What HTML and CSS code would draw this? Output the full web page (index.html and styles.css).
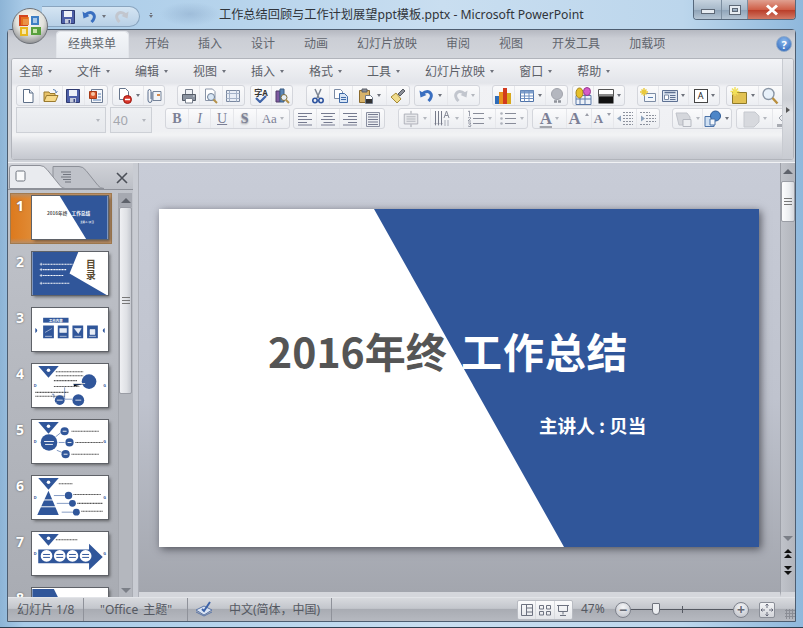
FILE: index.html
```html
<!DOCTYPE html>
<html lang="zh-CN">
<head>
    <meta charset="UTF-8">
    <title>工作总结回顾与工作计划展望ppt模板.pptx - Microsoft PowerPoint</title>
    <link rel="stylesheet" href="styles.css">
</head>
<body>

<!-- icon sprite -->
<svg class="sprite" xmlns="http://www.w3.org/2000/svg">
    <symbol id="i-new" viewBox="0 0 16 16"><path d="M3.5 1.5h6l3.5 3.5v9.500h-9.500z" fill="#fff" stroke="#5d6f88"/><path d="M9.500 1.500v3.500h3.500" fill="#dfe6f0" stroke="#5d6f88"/></symbol>
    <symbol id="i-open" viewBox="0 0 16 16"><path d="M1 13V4h5l1 1.500h5V8" fill="#e8c36a" stroke="#9a7a2e"/><path d="M1 13.500l2.500-6h11.500l-2.500 6z" fill="#f6d98a" stroke="#9a7a2e"/><path d="M10 1.500q3 0 3.500 3l1-1M13.500 4.500l-1.500-.5" fill="none" stroke="#5a7fb0"/></symbol>
    <symbol id="i-save" viewBox="0 0 16 16"><path d="M1.500 1.500h13v13h-13z" fill="#4d5fa8" stroke="#2f3a70"/><path d="M4 2h8v6H4z" fill="#eef1f8"/><path d="M5 10h6v4.500H5z" fill="#c6cbdc"/><path d="M8.500 11h1.500v3h-1.500z" fill="#3a4680"/></symbol>
    <symbol id="i-publish" viewBox="0 0 16 16"><path d="M3.500 1.500h11v13h-11z" fill="#f4f6fa" stroke="#6d7c95"/><path d="M1.500 3.500h7v7h-7z" fill="#d9572b" stroke="#a63a16"/><circle cx="5" cy="6" r="2" fill="#f6c6a6"/><path d="M10 6h3M10 9h3M5 12h8" stroke="#5a7fb0"/></symbol>
    <symbol id="i-nofile" viewBox="0 0 16 16"><path d="M2.500 .5h6l3 3v8h-9z" fill="#fff" stroke="#66758c"/><circle cx="10.500" cy="11.500" r="4" fill="#d8352a" stroke="#9c1d14"/><path d="M8 11.500h5" stroke="#fff" stroke-width="1.500"/></symbol>
    <symbol id="i-attach" viewBox="0 0 16 16"><path d="M7 3.500h8v9H7z" fill="#f2f4f8" stroke="#76849a"/><path d="M11 6h3v2h-3z" fill="#d58a4c"/><path d="M6 4v8q0 2.500-2 2.500T2 12V3.500q0-2 1.500-2T5 3.500V11" fill="none" stroke="#5b6f8e"/></symbol>
    <symbol id="i-print" viewBox="0 0 16 16"><path d="M4.500 1.500h7v5h-7z" fill="#eef0f4" stroke="#777f8c"/><path d="M1.500 6.500h13v6h-13z" fill="#8a929f" stroke="#555c68"/><path d="M4.500 10.500h7v4.500h-7z" fill="#fff" stroke="#777f8c"/><path d="M12 8h1.500" stroke="#e4e8ee"/></symbol>
    <symbol id="i-preview" viewBox="0 0 16 16"><path d="M2.500 1h7l2.500 2.500v9h-9.500z" fill="#fff" stroke="#8a95a8"/><circle cx="8" cy="9" r="3.500" fill="#d9e7f5" stroke="#6f7f96"/><path d="M10.500 11.500l3.500 3.500" stroke="#b5924a" stroke-width="2"/></symbol>
    <symbol id="i-grid" viewBox="0 0 16 16"><path d="M1.500 2.500h13v11h-13z" fill="#e9eef6" stroke="#7a88a0"/><path d="M1.500 5.500h13M4.500 2.500v11M11.500 2.500v11M1.500 10.500h13" stroke="#a4b2c8" fill="none"/></symbol>
    <symbol id="i-research" viewBox="0 0 16 16"><path d="M2 3h4v11H2z" fill="#7d5aa0" stroke="#503a6a"/><path d="M6 1h4v13H6z" fill="#5a86b8" stroke="#3a5a80"/><circle cx="10" cy="9.500" r="3" fill="#e6eef6" stroke="#7a6a3a"/><path d="M12 12l3 3" stroke="#b5924a" stroke-width="2"/></symbol>
    <symbol id="i-cut" viewBox="0 0 16 16"><path d="M5 1l4 9M11 1l-4 9" stroke="#7d8694" stroke-width="1.500" fill="none"/><circle cx="5" cy="12.500" r="2.200" fill="none" stroke="#2f55a0" stroke-width="1.600"/><circle cx="11" cy="12.500" r="2.200" fill="none" stroke="#2f55a0" stroke-width="1.600"/></symbol>
    <symbol id="i-copy" viewBox="0 0 16 16"><path d="M1.500 1.500h6l2 2v7h-8z" fill="#fff" stroke="#7a8aa4"/><path d="M6.500 5.500h5l3 3v6h-8z" fill="#d7e4f5" stroke="#3f6aa8"/><path d="M8 9.500h5M8 11.500h5" stroke="#3f6aa8"/></symbol>
    <symbol id="i-paste" viewBox="0 0 16 16"><path d="M1.500 2.500h10v12h-10z" fill="#d7b36a" stroke="#8b6a2c"/><path d="M4 1h5v3H4z" fill="#8a8f98" stroke="#5a5f68"/><path d="M7.500 7.500h5l2 2v6h-7z" fill="#fff" stroke="#6c7686"/><path d="M8 11h6v4H8z" fill="#333"/></symbol>
    <symbol id="i-brush" viewBox="0 0 16 16"><path d="M1 9l5-4 5 6-4 4z" fill="#f0dc8c" stroke="#a58a36"/><path d="M8 6l5-5 2 2-5 5z" fill="#8b8f98" stroke="#565a63"/></symbol>
    <symbol id="i-undo" viewBox="0 0 16 16"><path d="M3 6q6-5 9 0 1.500 3-2.500 7" fill="none" stroke="currentColor" stroke-width="3"/><path d="M.5 2.500l1 7 6-2.500z" fill="currentColor"/></symbol>
    <symbol id="i-redo" viewBox="0 0 16 16"><path d="M13 6q-6-5-9 0-1.500 3 2.500 7" fill="none" stroke="currentColor" stroke-width="3"/><path d="M15.500 2.500l-1 7-6-2.500z" fill="currentColor"/></symbol>
    <symbol id="i-chart" viewBox="0 0 18 18"><path d="M1 9h4v8H1z" fill="#2f6cb8"/><path d="M5 5h4v12H5z" fill="#e8901e"/><path d="M9 1h4v16H9z" fill="#d23a1e"/><path d="M13 6h4v11h-4z" fill="#d8a81e"/></symbol>
    <symbol id="i-table" viewBox="0 0 16 16"><path d="M1.500 2.500h13v11h-13z" fill="#fff" stroke="#4e72a8"/><path d="M1.500 2.500h13v3h-13z" fill="#7f9fcc"/><path d="M1.500 8h13M1.500 10.500h13M5.500 2.500v11M10 2.500v11" stroke="#6f8fc0" fill="none"/></symbol>
    <symbol id="i-link" viewBox="0 0 16 16"><circle cx="8" cy="6" r="5.500" fill="#b4b7bf" stroke="#a0a3ab"/><path d="M5 13.500h3M9 13.500h3" stroke="#8f929a" stroke-width="2.500"/></symbol>
    <symbol id="i-shapes" viewBox="0 0 18 18"><path d="M2 8.500h15v9H2z" fill="#eef2f8" stroke="#5a78a8"/><path d="M2 12h15M6 8.500v9M11 8.500v9" stroke="#5a78a8"/><ellipse cx="5.500" cy="6" rx="3.500" ry="5" fill="#e6c02a" stroke="#a5851a"/><ellipse cx="13" cy="4.500" rx="3.500" ry="4" fill="#d65cc8" stroke="#983a8c"/></symbol>
    <symbol id="i-color" viewBox="0 0 16 16"><path d="M.5 1.500h15v6.500H.5z" fill="#fff" stroke="#555"/><path d="M.5 8h15v7.500H.5z" fill="#111"/><path d="M1 6h14v2.500H1z" fill="#8a8a8a"/></symbol>
    <symbol id="i-newbox" viewBox="0 0 16 16"><path d="M4.500 5.500h11v8h-11z" fill="#f4f7fb" stroke="#7d8ca4"/><path d="M8 9.500h5" stroke="#5a7fb0"/><path d="M4 0v8M0 4h8M1.500 1.500l5 5M6.500 1.500l-5 5" stroke="#eac93a" stroke-width="1.400"/></symbol>
    <symbol id="i-layout" viewBox="0 0 16 16"><path d="M.5 2.500h15v11H.5z" fill="#dfe7f2" stroke="#5d7092"/><path d="M2.500 4.500h11" stroke="#5d7092" stroke-width="1.500"/><path d="M2.500 7h4v4.500h-4z" fill="#fff" stroke="#7a8aa4"/><path d="M8 7.500h5.500M8 9.500h5.500M8 11.500h5.500" stroke="#5d7092"/></symbol>
    <symbol id="i-theme" viewBox="0 0 18 18"><path d="M2.500 5.500h14v11h-14z" fill="#e2c253" stroke="#8f7a2a"/><path d="M5 0v9M.5 4.500h9M2 1.500l6 6M8 1.500l-6 6" stroke="#f2e05a" stroke-width="1.400"/></symbol>
    <symbol id="i-zoom" viewBox="0 0 18 18"><circle cx="7.500" cy="7" r="5.500" fill="#e8f1fa" stroke="#8a96a6" stroke-width="1.400"/><path d="M11.500 11l5 5.500" stroke="#b98f3e" stroke-width="2.400"/></symbol>
    <symbol id="i-left" viewBox="0 0 16 16"><path d="M1 2.500h14M1 5.500h9M1 8.500h14M1 11.500h9M1 14h14" stroke="#767b90" fill="none"/></symbol>
    <symbol id="i-center" viewBox="0 0 16 16"><path d="M1 2.500h14M3.500 5.500h9M1 8.500h14M3.500 11.500h9M1 14h14" stroke="#767b90" fill="none"/></symbol>
    <symbol id="i-right" viewBox="0 0 16 16"><path d="M1 2.500h14M6 5.500h9M1 8.500h14M6 11.500h9M1 14h14" stroke="#767b90" fill="none"/></symbol>
    <symbol id="i-just" viewBox="0 0 16 16"><path d="M1.500 1.500h13v14h-13z" fill="#eceef2" stroke="#8b90a2"/><path d="M3 3.500h10M3 6h10M3 8.500h10M3 11h10M3 13.500h10" stroke="#767b90"/></symbol>
    <symbol id="i-ltext" viewBox="0 0 20 18"><path d="M2.500 3.500h15v11h-15z" fill="#e8e9ec" stroke="#a9acb4"/><path d="M5 6.500h10M5 9h10M5 11.500h10" stroke="#aeb1b9"/><path d="M10 0v3M10 15v3" stroke="#9498a2"/></symbol>
    <symbol id="i-bull" viewBox="0 0 18 18"><circle cx="2.500" cy="3.500" r="1.300" fill="#aeb2bc"/><circle cx="2.500" cy="8.500" r="1.300" fill="#aeb2bc"/><circle cx="2.500" cy="13.500" r="1.300" fill="#aeb2bc"/><path d="M6 3.500h11M6 8.500h11M6 13.500h11" stroke="#888c99"/></symbol>
    <symbol id="i-outdent" viewBox="0 0 18 16"><path d="M7 1.500h10M7 4.500h10M7 7.500h10M7 10.500h10M7 13.500h10" stroke="#8d929e" stroke-dasharray="2 1"/><path d="M1 7.500l4-3v6z" fill="#8da2bc"/></symbol>
    <symbol id="i-indent" viewBox="0 0 18 16"><path d="M1 1.500h10M7 4.500h10M7 7.500h10M7 10.500h10M1 13.500h10" stroke="#8d929e" stroke-dasharray="2 1"/><path d="M6 7.500l-4-3v6z" fill="#8da2bc"/></symbol>
    <symbol id="i-shape" viewBox="0 0 18 18"><path d="M1 3h11l3 4v3H8v5H4z" fill="#d5d7dc" stroke="#c0c3ca"/><path d="M8 9.500h8v7H8z" fill="#eceef1" stroke="#b5b8c0"/></symbol>
    <symbol id="i-arrange" viewBox="0 0 18 18"><path d="M1 6.500h9v10H1z" fill="#cfe0f3" stroke="#4b72a8"/><circle cx="11.500" cy="6" r="5" fill="#4d86c8" stroke="#2c5a96"/><path d="M6 9h5v6H6z" fill="#f2f6fb" stroke="#4b72a8"/></symbol>
    <symbol id="i-fill" viewBox="0 0 18 18"><path d="M2 2h11l4 4v6l-5 5H2z" fill="#d7d9de" stroke="#c6c9cf"/></symbol>
    <symbol id="i-bucket" viewBox="0 0 18 18"><path d="M3 8l6-6 6 6-6 6z" fill="#eceef1" stroke="#a0a4ad"/><path d="M1 14h16v3H1z" fill="#a8abb2"/></symbol>
    <symbol id="i-tick" viewBox="0 0 18 16"><path d="M1 9l8-4 8 4-8 5z" fill="#dbe5f4" stroke="#5d77a8"/><path d="M1 11l8 4 8-4" fill="none" stroke="#5d77a8"/><path d="M7 8l2 2 6-9" fill="none" stroke="#3d63a8" stroke-width="2"/></symbol>
    <symbol id="i-tri" viewBox="0 0 77 44"><path d="M6 2h21L16.500 14z" fill="#30569a"/><circle cx="16.500" cy="6.500" r="1.800" fill="#fff"/></symbol>
</svg>

<header class="titlebar">
    <div class="qat">
        <svg class="ic"><use href="#i-save"/></svg>
        <svg class="ic undo-on"><use href="#i-undo"/></svg>
        <i class="caret"></i>
        <svg class="ic redo-off"><use href="#i-redo"/></svg>
    </div>
    <i class="caret qat-more"></i>
    <div class="doc-title">工作总结回顾与工作计划展望ppt模板.pptx - Microsoft PowerPoint</div>
    <div class="winbtns">
        <span class="wbtn w-min"><i></i></span>
        <span class="wbtn w-max"><i></i></span>
        <span class="wbtn w-close">
            <svg viewBox="0 0 14 12" width="14" height="12"><path d="M2 1.500l10 9M12 1.500l-10 9" stroke="#fff" stroke-width="3"/></svg>
        </span>
    </div>
</header>

<!-- office button sits over the title bar and the tab strip -->
<div class="orb">
    <svg viewBox="0 0 36 36" width="36" height="36">
        <defs>
            <radialGradient id="orbfill" cx="50%" cy="35%" r="65%">
                <stop offset="0" stop-color="#fbfbf8"/>
                <stop offset=".6" stop-color="#e2e2dc"/>
                <stop offset="1" stop-color="#8f9094"/>
            </radialGradient>
        </defs>
        <circle cx="18" cy="18" r="17.500" fill="url(#orbfill)" stroke="#6e7278"/>
        <path d="M7 7h9v4h-5v6h5v1H7z" fill="#d4451e"/>
        <path d="M9 9h8v8H9z" fill="#e87a1e" opacity=".8"/>
        <path d="M19 8h8v9h-8z" fill="#3f7fc4"/>
        <path d="M21 10h4v5h-4z" fill="#a8c8e8"/>
        <path d="M8 19h8v9H8z" fill="#e8b81e"/>
        <path d="M10 21h4v5h-4z" fill="#f8e8a8"/>
        <path d="M19 19h10v8H19z" fill="#58a03c"/>
        <path d="M21 21h4v4h-4z" fill="#c8e4a8"/>
    </svg>
</div>

<div class="frame">
    <nav class="tabs">
        <span class="tab active">经典菜单</span>
        <span class="tab">开始</span>
        <span class="tab">插入</span>
        <span class="tab">设计</span>
        <span class="tab">动画</span>
        <span class="tab">幻灯片放映</span>
        <span class="tab">审阅</span>
        <span class="tab">视图</span>
        <span class="tab">开发工具</span>
        <span class="tab">加载项</span>
        <span class="help">?</span>
    </nav>

    <section class="ribbon">
        <div class="ribbon-main">
            <div class="menu">
                <span class="menu-item">全部<i class="caret"></i></span>
                <span class="menu-item">文件<i class="caret"></i></span>
                <span class="menu-item">编辑<i class="caret"></i></span>
                <span class="menu-item">视图<i class="caret"></i></span>
                <span class="menu-item">插入<i class="caret"></i></span>
                <span class="menu-item">格式<i class="caret"></i></span>
                <span class="menu-item">工具<i class="caret"></i></span>
                <span class="menu-item">幻灯片放映<i class="caret"></i></span>
                <span class="menu-item">窗口<i class="caret"></i></span>
                <span class="menu-item">帮助<i class="caret"></i></span>
            </div>

            <div class="tools row1">
                <div class="grp r1-a">
                    <span class="btn"><svg class="ic"><use href="#i-new"/></svg></span>
                    <span class="btn"><svg class="ic"><use href="#i-open"/></svg></span>
                    <span class="btn"><svg class="ic"><use href="#i-save"/></svg></span>
                    <span class="btn"><svg class="ic"><use href="#i-publish"/></svg></span>
                </div>
                <div class="grp r1-b">
                    <span class="btn split"><svg class="ic"><use href="#i-nofile"/></svg><i class="caret"></i></span>
                    <span class="btn"><svg class="ic"><use href="#i-attach"/></svg></span>
                </div>
                <div class="grp r1-c">
                    <span class="btn"><svg class="ic"><use href="#i-print"/></svg></span>
                    <span class="btn"><svg class="ic"><use href="#i-preview"/></svg></span>
                    <span class="btn"><svg class="ic"><use href="#i-grid"/></svg></span>
                </div>
                <div class="grp r1-d">
                    <span class="btn spell">
                        <span class="spell-txt">字A</span>
                        <svg class="spell-tick" viewBox="0 0 12 8" width="12" height="8"><path d="M1 3l4 4 6-6" fill="none" stroke="#3f63a8" stroke-width="2.200"/></svg>
                    </span>
                    <span class="btn"><svg class="ic"><use href="#i-research"/></svg></span>
                </div>
                <div class="grp r1-e">
                    <span class="btn"><svg class="ic"><use href="#i-cut"/></svg></span>
                    <span class="btn"><svg class="ic"><use href="#i-copy"/></svg></span>
                    <span class="btn split"><svg class="ic"><use href="#i-paste"/></svg><i class="caret"></i></span>
                    <span class="btn"><svg class="ic"><use href="#i-brush"/></svg></span>
                </div>
                <div class="grp r1-f">
                    <span class="btn split"><svg class="ic undo-on"><use href="#i-undo"/></svg><i class="caret"></i></span>
                    <span class="btn split"><svg class="ic redo-off"><use href="#i-redo"/></svg><i class="caret off"></i></span>
                </div>
                <div class="grp r1-g">
                    <span class="btn"><svg class="ic lg"><use href="#i-chart"/></svg></span>
                    <span class="btn split"><svg class="ic"><use href="#i-table"/></svg><i class="caret"></i></span>
                    <span class="btn"><svg class="ic"><use href="#i-link"/></svg></span>
                </div>
                <div class="grp r1-h">
                    <span class="btn"><svg class="ic lg"><use href="#i-shapes"/></svg></span>
                    <span class="btn split"><svg class="ic"><use href="#i-color"/></svg><i class="caret"></i></span>
                </div>
                <div class="grp r1-i">
                    <span class="btn"><svg class="ic"><use href="#i-newbox"/></svg></span>
                    <span class="btn split"><svg class="ic"><use href="#i-layout"/></svg><i class="caret"></i></span>
                    <span class="btn split"><span class="a-box">A</span><i class="caret"></i></span>
                </div>
                <div class="grp r1-j">
                    <span class="btn split"><svg class="ic lg"><use href="#i-theme"/></svg><i class="caret"></i></span>
                    <span class="btn split"><svg class="ic lg"><use href="#i-zoom"/></svg><i class="caret"></i></span>
                </div>
            </div>

            <div class="tools row2">
                <div class="combo c-font"><i class="caret off"></i></div>
                <div class="combo c-size">40<i class="caret off"></i></div>
                <div class="grp r2-a">
                    <span class="btn fmt f-b">B</span>
                    <span class="btn fmt f-i">I</span>
                    <span class="btn fmt f-u">U</span>
                    <span class="btn fmt f-s">S</span>
                    <span class="btn fmt split f-aa">Aa<i class="caret off"></i></span>
                </div>
                <div class="grp r2-b">
                    <span class="btn"><svg class="ic"><use href="#i-left"/></svg></span>
                    <span class="btn"><svg class="ic"><use href="#i-center"/></svg></span>
                    <span class="btn"><svg class="ic"><use href="#i-right"/></svg></span>
                    <span class="btn"><svg class="ic"><use href="#i-just"/></svg></span>
                </div>
                <div class="grp r2-c">
                    <span class="btn split"><svg class="ic lg"><use href="#i-ltext"/></svg><i class="caret off"></i></span>
                    <span class="btn split">
                        <svg class="ic lg" viewBox="0 0 18 18"><path d="M1.500 1v13M4.500 1v13M7.500 1v13" stroke="#777b8a"/><path d="M.5 13l1 3 1-3zM3.500 13l1 3 1-3zM6.500 13l1 3 1-3z" fill="#777b8a"/><path d="M10 8l2.500-7 2.500 7M11 5.500h3" fill="none" stroke="#888c99"/><path d="M11 10v6M14 10v6" stroke="#aaaeb8"/></svg>
                        <i class="caret off"></i>
                    </span>
                    <span class="btn split">
                        <svg class="ic lg" viewBox="0 0 18 18"><path d="M1 1.500l1.500-.5v5M1 8q1.500-1.500 3 0l-3 3h3M1 13h3l-1.500 1.500q1.500 0 1.500 1.500t-3 0" fill="none" stroke="#8f93a0" stroke-width=".9"/><path d="M6 3.500h11M6 8.500h11M6 13.500h11" stroke="#888c99"/></svg>
                        <i class="caret off"></i>
                    </span>
                    <span class="btn split"><svg class="ic lg"><use href="#i-bull"/></svg><i class="caret off"></i></span>
                </div>
                <div class="grp r2-d">
                    <span class="btn split fmt f-col">A<i class="caret off"></i></span>
                    <span class="btn fmt f-up">A<i class="up"></i></span>
                    <span class="btn fmt f-dn">A<i class="dn"></i></span>
                    <span class="btn"><svg class="ic lg"><use href="#i-outdent"/></svg></span>
                    <span class="btn"><svg class="ic lg"><use href="#i-indent"/></svg></span>
                </div>
                <div class="grp r2-e">
                    <span class="btn split"><svg class="ic lg"><use href="#i-shape"/></svg><i class="caret off"></i></span>
                    <span class="btn split"><svg class="ic lg"><use href="#i-arrange"/></svg><i class="caret"></i></span>
                </div>
                <div class="grp r2-f">
                    <span class="btn split"><svg class="ic lg"><use href="#i-fill"/></svg><i class="caret off"></i></span>
                    <span class="btn"><svg class="ic lg"><use href="#i-bucket"/></svg></span>
                </div>
            </div>
        </div>
        <div class="ribbon-more"><i></i></div>
    </section>

    <section class="workspace">
        <aside class="pane">
            <div class="pane-head">
                <svg class="pane-tabs" viewBox="0 0 104 24" width="104" height="24">
                    <path d="M44 23.500V1.500h26q4 0 7 4l12 15q2 3 6 3z" fill="#bfc2c9" stroke="#8d9098"/>
                    <path d="M.5 23.500V3q0-2.500 2.500-2.500h28q4 0 7 4l13 16q2 3 5 3z" fill="#e9ebef" stroke="#8d9098"/>
                    <rect x="7" y="6" width="9" height="10" rx="1.500" fill="#f9fafb" stroke="#6f747e"/>
                    <path d="M52 7h10M54 9.500h8M52 12h10M54 14.500h8M56 17h6" stroke="#666b75" stroke-width=".9"/>
                </svg>
                <svg class="pane-close" viewBox="0 0 12 12" width="12" height="12"><path d="M1 1l10 10M11 1L1 11" stroke="#4c5058" stroke-width="1.600"/></svg>
            </div>
            <div class="pane-body">
                <div class="thumbs">
                    <div class="thumb-row selected">
                        <span class="num">1</span>
                        <svg class="mini" viewBox="0 0 77 44">
                            <path d="M28 0h49v44H55z" fill="#30569a"/>
                            <text x="15" y="19" class="t1" fill="#555">2016年终</text>
                            <text x="40" y="19" class="t1" fill="#fff">工作总结</text>
                            <text x="49" y="27.500" class="t2" fill="#fff">主讲人 : 贝当</text>
                        </svg>
                    </div>
                    <div class="thumb-row">
                        <span class="num">2</span>
                        <svg class="mini" viewBox="0 0 77 44">
                            <path d="M0 0h47l-9 22 38 22H0z" fill="#30569a"/>
                            <path d="M11 12.500h30M11 18h24M11 24h21M11 32h27" class="gk w"/>
                            <path d="M9 11v3M7.500 12.500h3M9 16.500v3M7.500 18h3M9 22.500v3M7.500 24h3M9 30.500v3M7.500 32h3" stroke="#fff" stroke-width=".7"/>
                            <text x="60" y="8" class="t3">目录</text>
                        </svg>
                    </div>
                    <div class="thumb-row">
                        <span class="num">3</span>
                        <svg class="mini" viewBox="0 0 77 44">
                            <path d="M11 10h26v5H11z" fill="#30569a"/>
                            <text x="17" y="14" class="t4" fill="#fff">工作内容</text>
                            <path d="M11 18h11v13H11zM26 18h11v13H26zM41 18h11v13H41zM56 18h11v13H56z" fill="#30569a"/>
                            <path d="M13 25l7-4M28 21h7v4h-7zM43 21h7l-3 5zM59 22h5v5h-5z" fill="#e6ecf6" stroke="#fff" stroke-width=".5"/>
                            <path d="M13 29h7M28 29h7M43 29h7M58 29h7" stroke="#fff" stroke-width=".6"/>
                            <path d="M3 20.500q4 2.500 0 5zM74 20.500q-4 2.500 0 5z" fill="#30569a"/>
                        </svg>
                    </div>
                    <div class="thumb-row">
                        <span class="num">4</span>
                        <svg class="mini" viewBox="0 0 77 44">
                            <use href="#i-tri"/>
                            <path d="M24 8h28M24 12h28M22 17h24M22 23h26M3 29h34M3 33h30" class="gk"/>
                            <circle cx="58" cy="18" r="7.500" fill="#30569a"/>
                            <circle cx="28" cy="37" r="5" fill="#30569a"/>
                            <circle cx="47" cy="37" r="6" fill="#30569a"/>
                            <path d="M44 37h6M25 37h6M54 20h-12v3M3 40h22" stroke="#fff" stroke-width=".8"/>
                            <path d="M33 24v12M33 36h8M42 21h8M20 31h2v4" stroke="#30569a" stroke-width=".6" fill="none"/>
                            <text x="1.500" y="24" class="t5">D</text>
                            <text x="72.500" y="24" class="t5">G</text>
                        </svg>
                    </div>
                    <div class="thumb-row">
                        <span class="num">5</span>
                        <svg class="mini" viewBox="0 0 77 44">
                            <use href="#i-tri"/>
                            <circle cx="17" cy="23" r="8.500" fill="#30569a"/>
                            <circle cx="33" cy="11.500" r="4.200" fill="#30569a"/>
                            <circle cx="38" cy="23" r="4.200" fill="#30569a"/>
                            <circle cx="34" cy="35" r="4.200" fill="#30569a"/>
                            <path d="M12 22h10M13 25h8M31 11.500h4M36 23h4M32 35h4" stroke="#fff" stroke-width=".9"/>
                            <path d="M24 17l5-4M27 23h6M25 31l5 2" stroke="#30569a" stroke-width=".6"/>
                            <path d="M40 11.500h28M44 23h28M40 35h28" class="gk"/>
                            <text x="1.500" y="24" class="t5">D</text>
                            <text x="72.500" y="24" class="t5">G</text>
                        </svg>
                    </div>
                    <div class="thumb-row">
                        <span class="num">6</span>
                        <svg class="mini" viewBox="0 0 77 44">
                            <use href="#i-tri"/>
                            <path d="M16.500 15L27 40H5z" fill="#30569a"/>
                            <path d="M10.500 24.500h12M8 31.500h17" stroke="#fff"/>
                            <path d="M27 8h14M42 19h28M46 28h26M50 36h22" class="gk"/>
                            <circle cx="37" cy="20" r="3.800" fill="#30569a"/>
                            <circle cx="41" cy="28" r="3.500" fill="#30569a"/>
                            <circle cx="45" cy="37" r="3.500" fill="#30569a"/>
                            <path d="M22 20h11M25 28h13M30 37h12" stroke="#30569a" stroke-width=".6"/>
                            <text x="1.500" y="24" class="t5">D</text>
                            <text x="72.500" y="24" class="t5">G</text>
                        </svg>
                    </div>
                    <div class="thumb-row">
                        <span class="num">7</span>
                        <svg class="mini" viewBox="0 0 77 44">
                            <use href="#i-tri"/>
                            <path d="M24 8h22" class="gk"/>
                            <path d="M6 18h52v-6l14 13.500L58 39v-7H6z" fill="#30569a"/>
                            <circle cx="14.500" cy="24.500" r="6" fill="#fff"/>
                            <circle cx="28" cy="24.500" r="6" fill="#fff"/>
                            <circle cx="41" cy="24.500" r="6" fill="#fff"/>
                            <circle cx="54.500" cy="24.500" r="6" fill="#fff"/>
                            <path d="M11 23h7M11 26h7M24.500 23h7M24.500 26h7M37.500 23h7M37.500 26h7M51 23h7M51 26h7" stroke="#30569a" stroke-width="1"/>
                            <text x="1.500" y="24" class="t5">D</text>
                            <text x="72.500" y="24" class="t5">G</text>
                        </svg>
                    </div>
                    <div class="thumb-row">
                        <span class="num">8</span>
                        <svg class="mini" viewBox="0 0 77 44"><path d="M0 1h22l5 10v4H0z" fill="#30569a"/></svg>
                    </div>
                </div>
                <div class="vbar pane-bar">
                    <span class="vb-btn"><i class="arr-up"></i></span>
                    <span class="vb-thumb"><i class="grip"></i></span>
                    <span class="vb-track"></span>
                    <span class="vb-btn"><i class="arr-down"></i></span>
                </div>
            </div>
        </aside>

        <div class="splitter"></div>

        <main class="stage">
            <div class="slide">
                <h1 class="slide-title"><span class="dark">2016年终</span> <span class="light">工作总结</span></h1>
                <p class="slide-sub">主讲人 : 贝当</p>
            </div>
        </main>

        <div class="vbar main-bar">
            <span class="vb-btn"><i class="arr-up"></i></span>
            <span class="vb-thumb"><i class="grip"></i></span>
            <span class="vb-track"></span>
            <span class="vb-btn"><i class="arr-down"></i></span>
            <span class="vb-page"><i class="arr-up"></i><i class="arr-up"></i></span>
            <span class="vb-page"><i class="arr-down"></i><i class="arr-down"></i></span>
        </div>
    </section>

    <footer class="status">
        <span class="st st-page">幻灯片 1/8</span>
        <span class="st st-theme">"Office 主题"</span>
        <span class="st st-spell"><svg class="ic lg"><use href="#i-tick"/></svg></span>
        <span class="st st-lang">中文(简体，中国)</span>
        <div class="views">
            <span class="view">
                <svg width="14" height="14" viewBox="0 0 14 14"><path d="M1.500 1.500h11v11h-11zM6.500 1.500v11M6.500 5h6M6.500 9h6" fill="none" stroke="#6d7280"/></svg>
            </span>
            <span class="view">
                <svg width="14" height="14" viewBox="0 0 14 14"><path d="M1.500 2.500h4v3.500h-4zM8.500 2.500h4v3.500h-4zM1.500 8.500h4v3.500h-4zM8.500 8.500h4v3.500h-4z" fill="none" stroke="#6d7280"/></svg>
            </span>
            <span class="view">
                <svg width="14" height="14" viewBox="0 0 14 14"><path d="M1 2.500h12M2.500 2.500v6h9v-6M7 8.500v3M4 12.500h6" fill="none" stroke="#6d7280"/></svg>
            </span>
        </div>
        <span class="percent">47%</span>
        <div class="zoom">
            <span class="zbtn">−</span>
            <div class="zline"><i class="zthumb"></i><i class="ztick"></i></div>
            <span class="zbtn">+</span>
        </div>
        <span class="fit">
            <svg width="12" height="12" viewBox="0 0 12 12"><path d="M6 0v4M4.500 1.500L6 0l1.500 1.500M6 12V8M4.500 10.500L6 12l1.500-1.500M0 6h4M1.500 4.500L0 6l1.500 1.500M12 6H8M10.500 4.500L12 6l-1.500 1.500" fill="none" stroke="#5b6070" stroke-width=".9"/></svg>
        </span>
        <span class="grip-corner"></span>
    </footer>
</div>

</body>
</html>
```

FILE: styles.css
```css
* {
    box-sizing: border-box;
}
html, body {
    margin: 0;
    height: 100%;
}
body {
    width: 803px;
    height: 628px;
    overflow: hidden;
    display: flex;
    flex-direction: column;
    position: relative;
    font-family: "Noto Sans", "Noto Sans CJK SC", sans-serif;
    font-size: 12px;
    color: #585c64;
    background:
        radial-gradient(ellipse 30px 12px at 190px 14px, rgba(120, 150, 185, .35), transparent),
        linear-gradient(90deg, #8db4d6 0, #a9cbe8 3%, #b7d4ec 30%, #c9def0 55%, #bcd6ec 85%, #8fb8dc 100%);
    box-shadow: inset 0 -1px 0 #2e3e50;
}
i {
    display: block;
    font-style: normal;
}
.sprite {
    position: absolute;
    width: 0;
    height: 0;
}
.ic {
    width: 16px;
    height: 16px;
    flex: none;
}
.ic.lg {
    width: 18px;
    height: 18px;
}
.undo-on {
    color: #3a6fc0;
}
.redo-off {
    color: #c2c6ce;
}
.caret {
    width: 0;
    height: 0;
    flex: none;
    border-left: 2.5px solid transparent;
    border-right: 2.5px solid transparent;
    border-top: 3px solid #6f737c;
}
.caret.off {
    border-top-color: #b4b7be;
}

/* title bar */
.titlebar {
    height: 29px;
    flex: none;
    display: flex;
    align-items: flex-start;
}
.qat {
    margin: 6px 0 0 42px;
    width: 98px;
    height: 21px;
    padding-left: 18px;
    display: flex;
    align-items: center;
    gap: 6px;
    border: 1px solid #8aa5bf;
    border-left: 0;
    border-radius: 0 12px 12px 0;
    background: linear-gradient(#d5e5f3, #b8d0e6);
}
.qat .caret {
    margin: 0 1px 0 -2px;
}
.qat-more {
    margin: 15px 0 0 9px;
    box-shadow: 0 -3px 0 -1px #6f737c;
}
.doc-title {
    margin: 6px 0 0 66px;
    width: 370px;
    white-space: nowrap;
    font-size: 12.2px;
    line-height: 18px;
    color: #30343a;
}
.winbtns {
    margin-left: auto;
    margin-right: 7px;
    height: 20px;
    display: flex;
    border: 1px solid #56687c;
    border-top: 0;
    border-radius: 0 0 4px 4px;
    overflow: hidden;
}
.wbtn {
    display: flex;
    align-items: center;
    justify-content: center;
    border-right: 1px solid #7c8ea0;
    background: linear-gradient(#c6d3df, #a6b8c9 50%, #8da2b7 51%, #b5c5d4);
}
.w-min {
    width: 28px;
}
.w-min i {
    width: 14px;
    height: 5px;
    margin-top: 4px;
    background: #e6ecf2;
    border: 1px solid #5d6876;
}
.w-max {
    width: 26px;
}
.w-max i {
    width: 12px;
    height: 10px;
    border: 1px solid #5d6876;
    box-shadow: inset 0 0 0 2px #e6ecf2, inset 0 0 0 3px #5d6876;
}
.w-close {
    width: 47px;
    border-right: 0;
    background: linear-gradient(#e0a090, #cf5f48 50%, #b83a26 51%, #d27a66);
}
.orb {
    position: absolute;
    left: 12px;
    top: 8px;
    width: 36px;
    height: 36px;
    z-index: 3;
}

/* window frame */
.frame {
    flex: 1;
    min-height: 0;
    margin: 0 7px 6px;
    display: flex;
    flex-direction: column;
    border: 1px solid #4d5d70;
    border-radius: 4px 4px 0 0;
    background: #cfd2d8;
}

/* tab strip */
.tabs {
    height: 28px;
    flex: none;
    display: flex;
    align-items: flex-end;
    padding-left: 49px;
    background: linear-gradient(#b5b8c0, #cbced5 30%, #d2d5db);
}
.tab {
    height: 26px;
    padding: 0 14.5px;
    line-height: 24px;
    color: #62666e;
    white-space: nowrap;
}
.tab.active {
    width: 71px;
    padding: 0 11px;
    margin-right: 2.5px;
    border-radius: 3px 3px 0 0;
    background: linear-gradient(#f4f6f9, #e7eaef);
    box-shadow: 0 0 0 1px #e2e5ea;
}
.help {
    margin: 0 3px 6px auto;
    width: 16px;
    height: 16px;
    border-radius: 50%;
    text-align: center;
    line-height: 15px;
    font-weight: 700;
    font-size: 11px;
    color: #fff;
    background: radial-gradient(circle at 50% 30%, #8ab8ec, #2a62b8);
    border: 1px solid #8aa6c8;
}

/* ribbon */
.ribbon {
    height: 102px;
    flex: none;
    margin: 0 1px 0 3px;
    display: flex;
    border: 1px solid #b1b4bb;
    border-radius: 3px;
    overflow: hidden;
    background: #e9ebef;
}
.ribbon-main {
    flex: 1;
    min-width: 0;
    padding: 0 0 0 4px;
    overflow: hidden;
    background: linear-gradient(#f3f4f7 0, #e3e5ea 24%, #f1f2f5 28%, #eff0f3 72%, #f2f3f5 76%, #dcdee3 85%, #c5c8cf 100%);
}
.ribbon-more {
    width: 11px;
    flex: none;
    position: relative;
    border-left: 1px solid #c8cbd1;
    background: linear-gradient(#e6e8ec, #cdd0d6 40%, #dfe1e5 55%, #c8cbd2);
}
.ribbon-more i {
    position: absolute;
    left: 3px;
    top: 48px;
    border-left: 4px solid #555;
    border-top: 3px solid transparent;
    border-bottom: 3px solid transparent;
}
.menu {
    height: 26px;
    display: flex;
    align-items: center;
    padding: 0 0 2px 3px;
}
.menu-item {
    display: flex;
    align-items: center;
    gap: 5px;
    margin-right: 25px;
    color: #5c6068;
    white-space: nowrap;
}
.tools {
    display: flex;
    align-items: flex-start;
}
.row2 {
    margin-top: 1px;
}
.grp {
    height: 21px;
    flex: none;
    display: flex;
    border: 1px solid #d4d6dc;
    border-radius: 3px;
    overflow: hidden;
    background: linear-gradient(#fbfbfc, #eceef2);
}
.row2 .grp {
    margin-top: 1px;
}
.btn {
    flex: 1 1 0;
    min-width: 0;
    display: flex;
    align-items: center;
    justify-content: center;
    gap: 3px;
    border-right: 1px solid #e6e7eb;
}
.btn:last-child {
    border-right: 0;
}
.btn.split {
    flex-grow: 1.5;
}
.spell {
    flex-direction: column;
    gap: 0;
}
.spell-txt {
    font-size: 8px;
    font-weight: 700;
    line-height: 9px;
    color: #333;
}
.spell-tick {
    margin-top: -2px;
}
.r1-a { width: 92px; margin-left: 0; }
.r1-b { width: 53px; margin-left: 4px; }
.r1-c { width: 68px; margin-left: 12px; }
.r1-d { width: 43px; margin-left: 5px; }
.r1-e { width: 104px; margin-left: 13px; }
.r1-f { width: 66px; margin-left: 4px; }
.r1-g { width: 76px; margin-left: 12px; }
.r1-h { width: 53px; margin-left: 4px; }
.r1-i { width: 83px; margin-left: 12px; }
.r1-j { width: 64px; margin-left: 6px; }
.a-box {
    width: 14px;
    height: 14px;
    border: 1px solid #444;
    background: #fff;
    color: #222;
    font-size: 9px;
    line-height: 12px;
    text-align: center;
}
.combo {
    height: 26px;
    flex: none;
    display: flex;
    align-items: center;
    justify-content: space-between;
    padding: 0 5px 0 2px;
    border: 1px solid #cdd0d6;
    background: linear-gradient(#eef0f3, #e6e8ec);
    color: #a4a7ae;
    font-size: 13px;
}
.combo .caret {
    margin-left: auto;
}
.c-font { width: 90px; }
.c-size { width: 42px; margin-left: 4px; }
.r2-a { width: 125px; margin-left: 13px; }
.r2-b { width: 92px; margin-left: 3px; }
.r2-c { width: 130px; margin-left: 13px; }
.r2-d { width: 128px; margin-left: 4px; }
.r2-e { width: 60px; margin-left: 12px; }
.r2-f { width: 62px; margin-left: 4px; }
.fmt {
    font-family: "Liberation Serif", serif;
    font-size: 14px;
    color: #7c8096;
    position: relative;
}
.f-b, .f-s { font-weight: 700; }
.f-i { font-style: italic; }
.f-u { text-decoration: underline; }
.f-s { text-shadow: 0 1px 2px #888; }
.f-aa { font-size: 13px; }
.f-col {
    flex-grow: 1.2;
    font-weight: 700;
    font-size: 17px;
    text-decoration: underline;
    text-decoration-thickness: 3px;
    text-decoration-color: #a2a5ac;
}
.f-up { font-size: 17px; font-weight: 700; flex-grow: 1.1; }
.f-dn { font-size: 13px; font-weight: 700; }
.up, .dn {
    width: 0;
    height: 0;
    margin: -8px 0 0 1px;
    border-left: 2.5px solid transparent;
    border-right: 2.5px solid transparent;
}
.up { border-bottom: 3px solid #9b9ea8; }
.dn { border-top: 3px solid #9b9ea8; }

/* workspace */
.workspace {
    flex: 1;
    min-height: 0;
    display: flex;
    margin-top: 2px;
    border-top: 1px solid #f0f1f4;
}
.pane {
    width: 125px;
    flex: none;
    display: flex;
    flex-direction: column;
    background: linear-gradient(#c2c5cc, #a9acb3);
}
.pane-head {
    height: 27px;
    flex: none;
    display: flex;
    align-items: flex-end;
    justify-content: space-between;
    padding: 0 5px 0 1px;
    border-bottom: 1px solid #8d9098;
    background: linear-gradient(#d0d2d8, #bcbfc6);
}
.pane-tabs {
    display: block;
}
.pane-close {
    margin-bottom: 5px;
}
.pane-body {
    flex: 1;
    min-height: 0;
    display: flex;
    overflow: hidden;
}
.thumbs {
    flex: 1;
    min-width: 0;
    padding: 3px 0 0 2px;
    overflow: hidden;
}
.thumb-row {
    width: 102px;
    height: 51px;
    margin-bottom: 5px;
    padding: 2px 0 0 21px;
    position: relative;
    border: 1px solid transparent;
}
.thumb-row.selected {
    border-color: #a17a4f;
    background:
        linear-gradient(#b98d64 0, transparent 10%, transparent 90%, #b98d64 100%),
        linear-gradient(90deg, #dd7a1e 0, #e08a34 20%, #c69468 55%, #b88d64 100%);
}
.num {
    position: absolute;
    left: 5px;
    top: 3px;
    font: 700 14px/18px "Open Sans", sans-serif;
    color: #fff;
    text-shadow: 0 0 2px #555;
}
.mini {
    display: block;
    width: 76px;
    height: 43px;
    background: #fff;
    outline: 1px solid #5f6268;
    box-shadow: 2px 2px 3px rgba(40, 40, 40, .6);
}
.t1 {
    font: 700 4.8px "Noto Sans CJK SC", sans-serif;
}
.t2 {
    font: 700 2.4px "Noto Sans CJK SC", sans-serif;
}
.t3 {
    font: 700 10px "Noto Sans CJK SC", sans-serif;
    fill: #5a4a30;
    writing-mode: vertical-rl;
    letter-spacing: 1px;
}
.t4 {
    font: 700 3.500px "Noto Sans CJK SC", sans-serif;
}
.t5 {
    font: 700 4px "Noto Sans", sans-serif;
    fill: #30569a;
}
.gk {
    stroke: #555;
    stroke-width: 1.100;
    stroke-dasharray: 1.200 .4;
    fill: none;
}
.gk.w {
    stroke: #fff;
}

/* scrollbars */
.vbar {
    flex: none;
    display: flex;
    flex-direction: column;
    background: #b4b7be;
}
.pane-bar {
    width: 14px;
    margin: 3px 1px 0 0;
    border-left: 1px solid #a4a7ae;
}
.main-bar {
    width: 15px;
    padding: 1px 0 13px;
    border-left: 1px solid #9da0a8;
    border-bottom: 5px solid #d5d7dc;
    background: linear-gradient(90deg, #c0c3ca, #b2b5bc);
}
.vb-btn {
    height: 14px;
    flex: none;
    display: flex;
    align-items: center;
    justify-content: center;
}
.pane-bar .vb-btn:first-child {
    background: #a6a9b1;
}
.main-bar .vb-btn:first-child {
    margin-bottom: 3px;
}
.arr-up, .arr-down {
    width: 0;
    height: 0;
    border-left: 5px solid transparent;
    border-right: 5px solid transparent;
}
.arr-up {
    border-bottom: 5px solid #5e626b;
}
.arr-down {
    border-top: 5px solid #7b7f87;
}
.vb-thumb {
    flex: none;
    display: flex;
    align-items: center;
    justify-content: center;
    border: 1px solid #9a9da5;
    border-radius: 2px;
    background: linear-gradient(90deg, #eff0f3, #dfe1e5 60%, #c6c9d0);
}
.pane-bar .vb-thumb {
    height: 187px;
}
.main-bar .vb-thumb {
    height: 41px;
    background: linear-gradient(90deg, #fdfdfe, #eceef1 60%, #d5d7dc);
}
.vb-track {
    flex: 1;
}
.grip {
    width: 8px;
    height: 7px;
    border-top: 1px solid #777;
    border-bottom: 1px solid #777;
    background: linear-gradient(transparent 2px, #777 2px, #777 3px, transparent 3px);
}
.vb-page {
    height: 17px;
    flex: none;
    display: flex;
    flex-direction: column;
    align-items: center;
    justify-content: center;
}
.vb-page .arr-up, .vb-page .arr-down {
    border-left-width: 4px;
    border-right-width: 4px;
    border-top-color: #111;
    border-bottom-color: #111;
    border-top-width: 4px;
    border-bottom-width: 4px;
}
.vb-page .arr-up + .arr-up,
.vb-page .arr-down + .arr-down {
    margin-top: 1px;
}

.splitter {
    width: 6px;
    flex: none;
    background: #c9ccd3;
    border-right: 1px solid #adb0b8;
}
.stage {
    flex: 1;
    min-width: 0;
    padding: 46px 0 0 20px;
    border-bottom: 5px solid #d5d7dc;
    background: linear-gradient(#c8ccd7 0, #bfc3ce 55%, #a3a6ae 100%);
}

/* slide */
.slide {
    width: 600px;
    height: 338px;
    position: relative;
    overflow: hidden;
    background: #fff;
    box-shadow: 2px 2px 8px rgba(30, 30, 40, .65);
    padding: 111px 0 0 109px;
}
.slide::before {
    content: "";
    position: absolute;
    inset: 0;
    background: #30569a;
    clip-path: polygon(215px 0, 600px 0, 600px 338px, 405px 338px);
}
.slide-title, .slide-sub {
    position: relative;
    margin: 0;
    font-family: "Noto Sans CJK SC", sans-serif;
    font-weight: 700;
    white-space: nowrap;
}
.slide-title {
    font-size: 41px;
    line-height: 60px;
}
.slide-title .dark {
    color: #555;
}
.slide-title .light {
    margin-left: 5px;
    letter-spacing: .8px;
    color: #fff;
}
.slide-sub {
    margin: 32px 0 0 271px;
    font-size: 18.6px;
    line-height: 26px;
    color: #fff;
}

/* status bar */
.status {
    height: 24px;
    flex: none;
    display: flex;
    align-items: center;
    border-top: 1px solid #e2e4e8;
    background: linear-gradient(#d8dade, #c3c6cc 45%, #a9acb3 50%, #b6b9c0);
}
.st {
    height: 100%;
    display: flex;
    align-items: center;
    flex: none;
    padding-bottom: 2px;
    white-space: nowrap;
    border-right: 1px solid #8f929a;
    color: #555962;
}
.st-page { width: 76px; padding-left: 9px; }
.st-theme { width: 104px; padding-left: 16px; word-spacing: 2px; }
.st-spell { width: 34px; padding-left: 7px; border-right: 0; }
.st-lang { width: 110px; padding-left: 7px; }
.views {
    margin-left: 185px;
    width: 56px;
    height: 20px;
    flex: none;
    display: flex;
    border: 1px solid #b8bbc2;
    border-radius: 2px;
    background: linear-gradient(#fbfbfc, #e4e6ea);
}
.view {
    flex: 1;
    display: flex;
    align-items: center;
    justify-content: center;
    border-right: 1px solid #d8dade;
}
.view:last-child {
    border-right: 0;
}
.percent {
    margin: 0 0 2px 8px;
    width: 26px;
    color: #555962;
}
.zoom {
    margin-left: 8px;
    width: 134px;
    flex: none;
    display: flex;
    align-items: center;
}
.zbtn {
    width: 16px;
    height: 16px;
    flex: none;
    border-radius: 50%;
    text-align: center;
    line-height: 13px;
    font-size: 14px;
    font-weight: 700;
    color: #666a74;
    border: 1px solid #7e828c;
    background: radial-gradient(circle at 50% 30%, #f6f7f9, #b8bbc3);
}
.zline {
    flex: 1;
    height: 1px;
    position: relative;
    background: #555962;
}
.zthumb {
    position: absolute;
    left: 21px;
    top: -6px;
    width: 8px;
    height: 12px;
    border: 1px solid #6e727c;
    border-radius: 1px 1px 4px 4px;
    background: #eceef1;
}
.ztick {
    position: absolute;
    left: 51px;
    top: -3px;
    width: 1px;
    height: 7px;
    background: #555962;
}
.fit {
    margin-left: 10px;
    width: 16px;
    height: 16px;
    flex: none;
    display: flex;
    align-items: center;
    justify-content: center;
    border: 1px solid #8b8f98;
    border-radius: 2px;
    background: linear-gradient(#f4f5f7, #d3d5da);
}
.grip-corner {
    margin: 8px 0 0 auto;
    width: 10px;
    height: 10px;
    flex: none;
    background: radial-gradient(circle, #8b8e96 1px, transparent 1.2px) 0 0 / 3px 3px;
}
```
